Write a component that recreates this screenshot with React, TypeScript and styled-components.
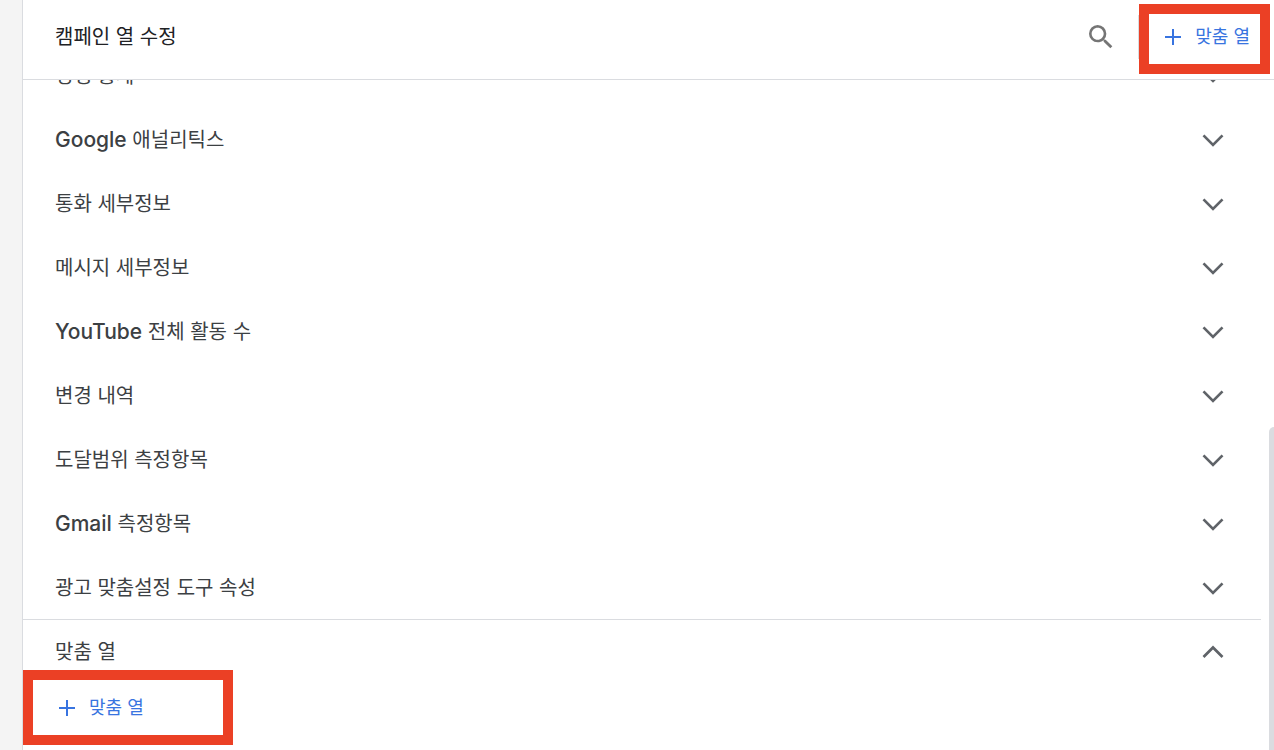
import React, { useState } from "react";
import styled, { createGlobalStyle } from "styled-components";

const GlobalStyle = createGlobalStyle`
  *, *::before, *::after { box-sizing: border-box; }
  body {
    margin: 0;
    background: #fff;
    font-family: Inter, "Noto Sans CJK KR", sans-serif;
    color: #3c4043;
  }
  button {
    margin: 0;
    padding: 0;
    border: 0;
    background: none;
    font: inherit;
    color: inherit;
    cursor: pointer;
  }
`;

const Page = styled.div`
  display: flex;
  height: 100vh;
  overflow: hidden;
`;

const Rail = styled.div`
  flex: 0 0 23px;
  background: #f4f4f4;
  border-right: 1px solid #dadce0;
`;

const Panel = styled.main`
  flex: 1;
  min-width: 0;
  display: flex;
  flex-direction: column;
`;

const Header = styled.header`
  flex: 0 0 80px;
  display: flex;
  align-items: center;
  padding: 0 0 5px 32px;
  border-bottom: 1px solid #dadce0;
`;

const Title = styled.h1`
  flex: 1;
  margin: 0;
  font-size: 20px;
  line-height: 28px;
  font-weight: 400;
  color: #202124;
`;

const SearchButton = styled.button`
  display: flex;
  margin-right: 21px;
  color: #757575;
`;

const HeaderAction = styled.div`
  position: relative;
  display: flex;
  align-items: center;
  height: 44px;
  padding: 0 24px 0 26px;
  border-left: 1px solid #dadce0;
`;

const AddButton = styled.button`
  display: flex;
  align-items: center;
  gap: 14px;
  font-size: 18px;
  line-height: 24px;
  font-weight: 400;
  color: #3874e0;
  white-space: nowrap;
`;

const Highlight = styled.span<{ $place: "header" | "section" }>`
  position: absolute;
  border: 10px solid #eb4025;
  pointer-events: none;
  ${({ $place }) =>
    $place === "header"
      ? "top: -11px; bottom: -15px; left: 0; right: 4px;"
      : "top: -14px; bottom: -13px; left: 0; width: 210px;"}
`;

const Body = styled.div`
  flex: 1;
  min-height: 0;
  display: flex;
  overflow: hidden;
`;

const List = styled.ul`
  flex: 1;
  margin: -36px 0 0;
  padding: 0;
  list-style: none;
`;

const Item = styled.li<{ $divided?: boolean }>`
  border-top: ${({ $divided }) => ($divided ? "1px solid #dadce0" : "0")};
  margin-top: ${({ $divided }) => ($divided ? "-1px" : "0")};
`;

const Row = styled.button`
  display: flex;
  align-items: center;
  justify-content: space-between;
  width: 100%;
  height: 64px;
  padding: 0 36px 0 32px;
  font-size: 20px;
  line-height: 28px;
  font-weight: 400;
  text-align: left;
`;

const Brand = styled.span`
  font-size: 21px;
  line-height: 20px;
  font-weight: 500;
`;

const SectionBody = styled.div`
  position: relative;
  display: flex;
  align-items: center;
  height: 48px;
  padding-left: 36px;
`;

const Track = styled.div`
  flex: 0 0 13px;
  display: flex;
  justify-content: flex-end;
  padding-top: 347px;
`;

const Thumb = styled.div`
  width: 5px;
  border-top-left-radius: 5px;
  background: #dadce0;
`;

const Chevron = ({ up }: { up: boolean }) => (
  <svg width="24" height="24" viewBox="0 0 24 24" fill="none" stroke="#5f6368" strokeWidth="2.7" aria-hidden="true">
    <path d={up ? "M2.5 17 12 7.5 21.5 17" : "M2.5 7.4 12 16.9 21.5 7.4"} />
  </svg>
);

const Plus = () => (
  <svg width="16" height="16" viewBox="0 0 16 16" stroke="currentColor" strokeWidth="2" aria-hidden="true">
    <path d="M8 0v16M0 8h16" />
  </svg>
);

const SearchIcon = () => (
  <svg width="32" height="32" viewBox="0 0 24 24" fill="currentColor" aria-hidden="true">
    <path d="M15.5 14h-.79l-.28-.27A6.471 6.471 0 0 0 16 9.5 6.5 6.5 0 1 0 9.5 16c1.61 0 3.09-.59 4.23-1.57l.27.28v.79l5 4.99L20.49 19l-4.99-5zm-6 0C7.01 14 5 11.99 5 9.5S7.01 5 9.5 5 14 7.01 14 9.5 11.99 14 9.5 14z" />
  </svg>
);

const groups: { brand?: string; name: string }[] = [
  { name: "경쟁 통계" },
  { brand: "Google", name: "애널리틱스" },
  { name: "통화 세부정보" },
  { name: "메시지 세부정보" },
  { brand: "YouTube", name: "전체 활동 수" },
  { name: "변경 내역" },
  { name: "도달범위 측정항목" },
  { brand: "Gmail", name: "측정항목" },
  { name: "광고 맞춤설정 도구 속성" },
];

export default function App() {
  const [customOpen, setCustomOpen] = useState(true);

  return (
    <>
      <GlobalStyle />
      <Page>
        <Rail />
        <Panel>
          <Header>
            <Title>캠페인 열 수정</Title>
            <SearchButton type="button" aria-label="검색">
              <SearchIcon />
            </SearchButton>
            <HeaderAction>
              <AddButton type="button">
                <Plus />
                맞춤 열
              </AddButton>
              <Highlight $place="header" />
            </HeaderAction>
          </Header>
          <Body>
            <List>
              {groups.map(({ brand, name }) => (
                <Item key={name}>
                  <Row type="button" aria-expanded={false}>
                    <span>
                      {brand && <Brand>{brand}</Brand>}
                      {brand && " "}
                      {name}
                    </span>
                    <Chevron up={false} />
                  </Row>
                </Item>
              ))}
              <Item $divided>
                <Row type="button" aria-expanded={customOpen} onClick={() => setCustomOpen(!customOpen)}>
                  맞춤 열
                  <Chevron up={customOpen} />
                </Row>
                {customOpen && (
                  <SectionBody>
                    <AddButton type="button">
                      <Plus />
                      맞춤 열
                    </AddButton>
                    <Highlight $place="section" />
                  </SectionBody>
                )}
              </Item>
            </List>
            <Track>
              <Thumb />
            </Track>
          </Body>
        </Panel>
      </Page>
    </>
  );
}
